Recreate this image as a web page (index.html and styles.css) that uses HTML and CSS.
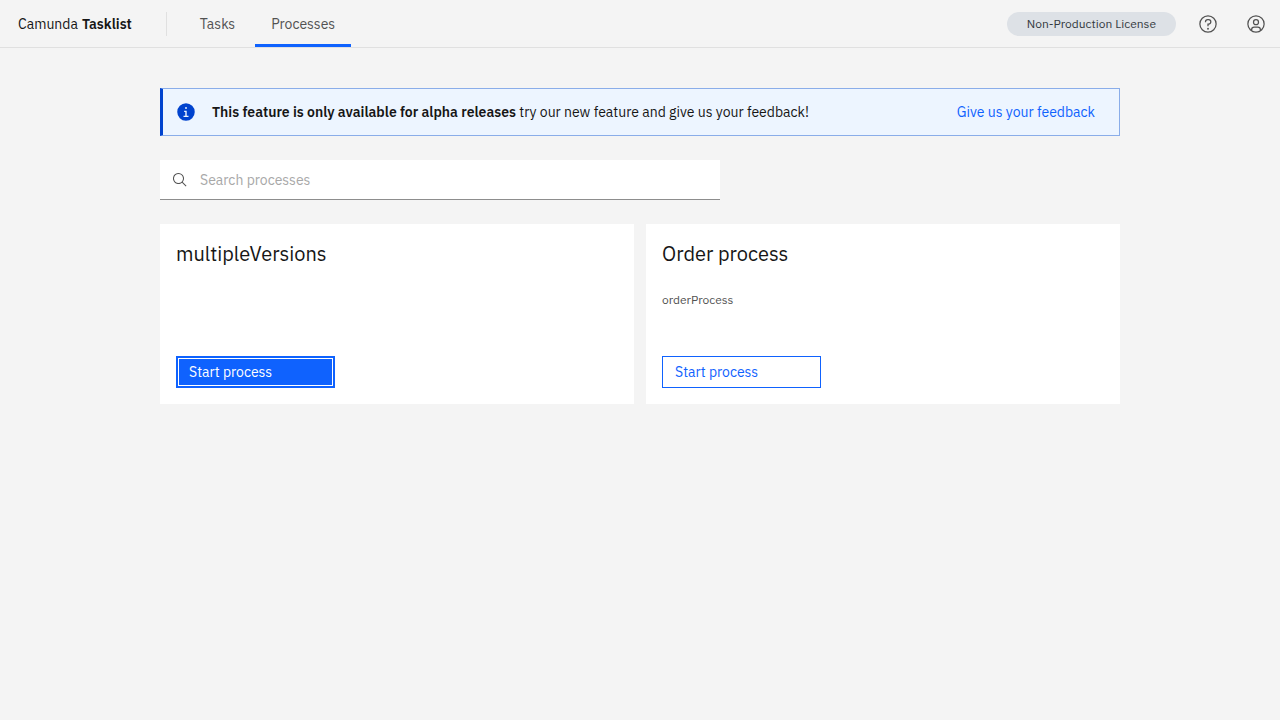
FILE: index.html
```html
<!DOCTYPE html>
<html lang="en">
<head>
<meta charset="utf-8">
<meta name="viewport" content="width=device-width, initial-scale=1">
<title>Camunda Tasklist</title>
<link rel="stylesheet" href="styles.css">
</head>
<body>
<header class="header">
  <a class="brand" href="#">Camunda <strong>Tasklist</strong></a>
  <nav class="nav" aria-label="Main">
    <a class="nav-link" href="#">Tasks</a>
    <a class="nav-link nav-link-active" href="#" aria-current="page">Processes</a>
  </nav>
  <div class="header-tools">
    <span class="license">Non-Production License</span>
    <button class="icon-button" type="button" aria-label="Help">
      <svg class="icon" viewBox="0 0 32 32" aria-hidden="true"><path d="M16 2a14 14 0 1014 14A14 14 0 0016 2zm0 26A12 12 0 1128 16 12 12 0 0116 28z"/><circle cx="16" cy="23.5" r="1.5"/><path d="M17 8H15.5A4.49 4.49 0 0011 12.5V13h2v-.5A2.5 2.5 0 0115.5 10H17a2.5 2.5 0 010 5H15v4.5h2V17a4.5 4.5 0 000-9z"/></svg>
    </button>
    <button class="icon-button" type="button" aria-label="Account">
      <svg class="icon" viewBox="0 0 32 32" aria-hidden="true"><path d="M16 8a5 5 0 105 5A5 5 0 0016 8zm0 8a3 3 0 113-3A3 3 0 0116 16z"/><path d="M16 2A14 14 0 1030 16 14 14 0 0016 2zM10 26.38V25a3 3 0 013-3h6a3 3 0 013 3v1.38a11.9 11.9 0 01-12 0zM23.99 24.92A5 5 0 0019 20H13a5 5 0 00-4.99 4.92 12 12 0 1115.98 0z"/></svg>
    </button>
  </div>
</header>
<main class="content">
  <section class="banner" role="status">
    <svg class="icon banner-icon" viewBox="0 0 32 32" aria-hidden="true"><path d="M16 2A14 14 0 1030 16 14 14 0 0016 2zm0 6a1.5 1.5 0 11-1.5 1.5A1.5 1.5 0 0116 8zm4 16.125H12v-2.25h2.875v-5.75H13v-2.25h4.125v8H20z"/></svg>
    <p class="banner-text"><strong>This feature is only available for alpha releases</strong> try our new feature and give us your feedback!</p>
    <a class="banner-link" href="#">Give us your feedback</a>
  </section>
  <label class="search">
    <svg class="search-icon" viewBox="0 0 32 32" aria-hidden="true"><path d="M29 27.586l-7.552-7.552a11.018 11.018 0 10-1.414 1.414L27.586 29zM4 13a9 9 0 119 9A9.01 9.01 0 014 13z"/></svg>
    <input class="search-input" type="search" placeholder="Search processes" aria-label="Search processes">
  </label>
  <div class="cards">
    <article class="card">
      <h2 class="card-title">multipleVersions</h2>
      <p class="card-id"></p>
      <button class="start start-focused" type="button">Start process</button>
    </article>
    <article class="card">
      <h2 class="card-title">Order process</h2>
      <p class="card-id">orderProcess</p>
      <button class="start" type="button">Start process</button>
    </article>
  </div>
</main>
</body>
</html>
```
FILE: styles.css
```css
*, *::before, *::after { box-sizing: border-box; }

body {
  margin: 0;
  min-height: 100vh;
  background: #f4f4f4;
  color: #161616;
  font-family: "IBM Plex Sans", Inter, "Liberation Sans", sans-serif;
  font-size: 14px;
  line-height: 18px;
}

h2, p { margin: 0; }
strong { font-weight: 600; }
a { text-decoration: none; }
button, input { font: inherit; }

.header {
  display: flex;
  height: 48px;
  border-bottom: 1px solid #e0e0e0;
}

.brand {
  display: flex;
  align-items: center;
  gap: 4px;
  padding: 0 34px 0 18px;
  color: #161616;
}

.nav {
  display: flex;
  align-items: stretch;
  gap: 4px;
}

.nav::before {
  content: "";
  align-self: center;
  width: 1px;
  height: 24px;
  margin-right: 13px;
  background: #e0e0e0;
}

.nav-link {
  display: flex;
  align-items: center;
  padding: 3px 16px 0;
  border-bottom: 3px solid transparent;
  color: #525252;
}

.nav-link-active { border-bottom-color: #0f62fe; }

.header-tools {
  display: flex;
  align-items: center;
  margin-left: auto;
}

.license {
  margin-right: 8px;
  padding: 3px 20px;
  border-radius: 12px;
  background: #dde1e6;
  color: #343a3f;
  font-size: 12px;
}

.icon-button {
  display: flex;
  align-items: center;
  justify-content: center;
  width: 48px;
  height: 47px;
  padding: 0;
  border: 0;
  background: none;
  color: #525252;
}

.icon {
  flex: none;
  width: 20px;
  height: 20px;
  fill: currentColor;
}

.content {
  display: flex;
  flex-direction: column;
  gap: 24px;
  max-width: 960px;
  margin: 40px auto;
}

.banner {
  display: flex;
  align-items: center;
  min-height: 48px;
  padding-right: 24px;
  border: 1px solid #8aade9;
  border-left: 3px solid #0043ce;
  background: #edf5ff;
}

.banner-icon {
  margin: 0 16px 0 13px;
  color: #0043ce;
}

.banner-text { flex: 1; }
.banner-link { color: #0f62fe; }

.search {
  display: flex;
  align-items: center;
  width: 58.333%;
  height: 40px;
  padding: 0 12px;
  gap: 12px;
  border-bottom: 1px solid #8d8d8d;
  background: #fff;
}

.search-icon {
  flex: none;
  width: 16px;
  height: 16px;
  fill: #525252;
}

.search-input {
  flex: 1;
  padding: 0;
  border: 0;
  outline: 0;
  background: none;
  color: #161616;
}

.search-input::placeholder { color: #a8a8a8; }

.cards {
  display: grid;
  grid-template-columns: 1fr 1fr;
  gap: 12px;
}

.card {
  display: flex;
  flex-direction: column;
  align-items: flex-start;
  min-height: 180px;
  padding: 16px;
  background: #fff;
}

.card-title {
  font-size: 20px;
  font-weight: 400;
  line-height: 28px;
}

.card-id {
  margin-top: 24px;
  color: #525252;
  font-size: 12px;
  line-height: 16px;
}

.start {
  width: 36%;
  min-height: 32px;
  margin-top: auto;
  padding: 0 12px;
  border: 1px solid #0f62fe;
  background: #fff;
  color: #0f62fe;
  text-align: left;
}

.start-focused {
  background: #0f62fe;
  color: #fff;
  box-shadow: inset 0 0 0 1px #0f62fe, inset 0 0 0 2px #fff;
}
```
